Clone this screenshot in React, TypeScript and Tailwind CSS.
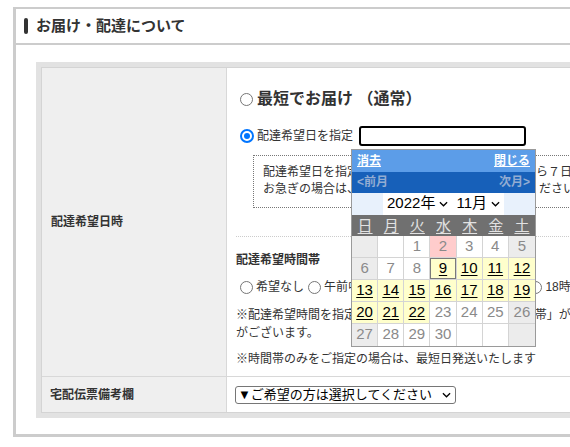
import React from "react"

function Radio({ checked, className = "" }: { checked?: boolean; className?: string }) {
  if (checked) {
    return (
      <span className={`inline-block shrink-0 w-[14px] h-[14px] rounded-full border-2 border-[#0075ff] bg-white p-[2px] ${className}`}>
        <span className="block w-full h-full rounded-full bg-[#0075ff]" />
      </span>
    )
  }
  return <span className={`inline-block shrink-0 w-[13px] h-[13px] rounded-full border border-[#767676] bg-white ${className}`} />
}

function Chevron({ className = "" }: { className?: string }) {
  return (
    <svg viewBox="0 0 10 6" className={className} fill="none" stroke="currentColor" strokeWidth="1.4">
      <polyline points="1,1 5,5 9,1" />
    </svg>
  )
}

type Day = { n?: number; bg: string; pick?: boolean; sel?: boolean }

const G = "bg-[#ececec]"
const W = "bg-white"
const Y = "bg-[#ffffcc]"
const P = "bg-[#ffcccc]"

const weeks: Day[][] = [
  [{ bg: G }, { bg: W }, { n: 1, bg: W }, { n: 2, bg: P }, { n: 3, bg: W }, { n: 4, bg: W }, { n: 5, bg: G }],
  [{ n: 6, bg: G }, { n: 7, bg: W }, { n: 8, bg: W }, { n: 9, bg: Y, pick: true, sel: true }, { n: 10, bg: Y, pick: true }, { n: 11, bg: Y, pick: true }, { n: 12, bg: Y, pick: true }],
  [13, 14, 15, 16, 17, 18, 19].map((n) => ({ n, bg: Y, pick: true })),
  [{ n: 20, bg: Y, pick: true }, { n: 21, bg: Y, pick: true }, { n: 22, bg: Y, pick: true }, { n: 23, bg: W }, { n: 24, bg: W }, { n: 25, bg: W }, { n: 26, bg: G }],
  [{ n: 27, bg: G }, { n: 28, bg: W }, { n: 29, bg: W }, { n: 30, bg: W }, { bg: W }, { bg: W }, { bg: G }],
]

function Calendar() {
  return (
    <div className="absolute left-[-10px] top-[21px] z-10 w-[185px] border border-[#9a9a9a] bg-white">
      <div className="h-[22px] bg-[#5c9de8] flex items-center justify-between px-[5px] text-[12px] font-bold text-white">
        <span className="underline">消去</span>
        <span className="underline">閉じる</span>
      </div>
      <div className="h-[21px] bg-[#1760b9] flex items-center justify-between px-[5px] text-[12px] font-bold text-[#93acd2]">
        <span>&lt;前月</span>
        <span>次月&gt;</span>
      </div>
      <div className="h-[22px] bg-[#e8f1fc] flex justify-center">
        <div className="bg-white flex items-center gap-[4px] px-[4px] text-[15px] text-black">
          <span>2022年</span>
          <Chevron className="w-[9px] h-[6px]" />
          <span className="ml-[4px]">11月</span>
          <Chevron className="w-[9px] h-[6px]" />
        </div>
      </div>
      <div className="h-[21px] bg-[#707070] grid grid-cols-7 text-[15px] text-[#e2e2e2]">
        {["日", "月", "火", "水", "木", "金", "土"].map((d) => (
          <span key={d} className="flex items-center justify-center underline underline-offset-2">{d}</span>
        ))}
      </div>
      <div className="grid grid-cols-7">
        {weeks.flat().map((d, i) => (
          <span
            key={i}
            className={`h-[22px] flex items-center justify-center text-[15px] border-b border-[#d4d4d4] ${i % 7 !== 6 ? "border-r" : ""} ${i >= 28 ? "border-b-0" : ""} ${d.bg} ${d.pick ? "text-black underline underline-offset-2" : "text-[#8a8a8a]"} ${d.sel ? "ring-1 ring-inset ring-[#7a7a7a]" : ""}`}
          >
            {d.n ?? ""}
          </span>
        ))}
      </div>
    </div>
  )
}

export default function App() {
  return (
    <div className="w-[570px] h-[447px] overflow-hidden bg-white text-[#333] font-['Liberation_Sans','Noto_Sans_CJK_JP',sans-serif]">
      <div className="ml-[13px] mt-[7px] w-[820px] border-t-2 border-l-[3px] border-b-[3px] border-[#cccccc]">
        <div className="h-[36px] flex items-center pl-[8px] border-b-2 border-[#cccccc]">
          <span className="w-[4px] h-[16px] rounded-full bg-[#333]" />
          <h2 className="ml-[8px] text-[15px] font-bold">お届け・配達について</h2>
        </div>

        <div className="pt-[17px] pb-[16px] pl-[20px]">
          <div className="border-[5px] border-[#e2e2e2]">
            <div className="border border-[#d4d4d4]">
              {/* 配達希望日時 */}
              <div className="flex h-[309px] border-b border-[#d8d8d8]">
                <div className="w-[185px] shrink-0 bg-[#efefef] border-r border-[#d8d8d8] flex items-center pl-[9px] text-[12px] font-bold">
                  配達希望日時
                </div>
                <div className="flex-1 pl-[9px] pt-[20px] text-[12px]">
                  <div className="h-[22px] flex items-center">
                    <Radio className="ml-[4px]" />
                    <span className="ml-[4px] text-[16px] font-bold">最短でお届け （通常）</span>
                  </div>
                  <div className="mt-[15px] h-[21px] flex items-center">
                    <Radio checked className="ml-[4px]" />
                    <span className="ml-[3px]">配達希望日を指定</span>
                    <span className="relative ml-[6px] inline-block w-[167px] h-[20px] border-2 border-black rounded-[3px] bg-white">
                      <Calendar />
                    </span>
                  </div>
                  <div className="mt-[9px] ml-[17px] pt-[8px] pb-[9px] pl-[9px] leading-[17px] border border-dotted border-[#777] whitespace-nowrap">
                    <p>
                      配達希望日を指定される場合は、ご注文日
                      <span className="ml-[9px]">翌日から７日以降でご指定ください。</span>
                    </p>
                    <p>お急ぎの場合は、最短でお届け（通常）をお選びください。</p>
                  </div>
                  <div className="mt-[28px] border-t border-dotted border-[#cccccc]" />
                  <p className="mt-[14px] leading-[18px] font-bold">配達希望時間帯</p>
                  <div className="mt-[9px] h-[18px] flex items-center whitespace-nowrap">
                    {["希望なし", "午前中", "14時～16時", "16時～18時", "18時～20時"].map((t) => (
                      <span key={t} className="flex items-center">
                        <Radio className="ml-[4px]" />
                        <span className="ml-[3px]">{t}</span>
                      </span>
                    ))}
                  </div>
                  <div className="mt-[10px] leading-[18px] whitespace-nowrap">
                    <p>※配達希望時間を指定されても、一部の地域では「時間帯」が使えない場合</p>
                    <p>がございます。</p>
                  </div>
                  <p className="mt-[8px] leading-[18px]">※時間帯のみをご指定の場合は、最短日発送いたします</p>
                </div>
              </div>

              {/* 宅配伝票備考欄 */}
              <div className="flex h-[35px]">
                <div className="w-[185px] shrink-0 bg-[#efefef] border-r border-[#d8d8d8] flex items-center pl-[8px] text-[12px] font-bold">
                  宅配伝票備考欄
                </div>
                <div className="flex-1 pl-[8px] flex items-center">
                  <div className="w-[221px] h-[18px] border border-[#767676] rounded-[3px] bg-white flex items-center pl-[2px] pr-[4px] text-[13px] text-black">
                    <span className="flex-1">▼ご希望の方は選択してください</span>
                    <Chevron className="w-[9px] h-[6px]" />
                  </div>
                </div>
              </div>
            </div>
          </div>
        </div>
      </div>
    </div>
  )
}
